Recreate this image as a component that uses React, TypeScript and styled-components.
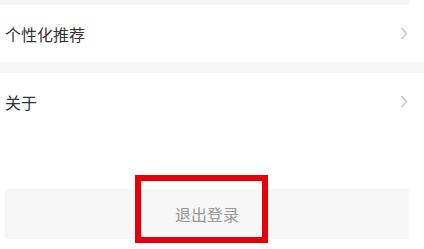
import styled, { createGlobalStyle } from 'styled-components';

const GlobalStyle = createGlobalStyle`
  html, body {
    margin: 0;
    padding: 0;
    background: #ffffff;
    font-family: "Noto Sans CJK SC", "Noto Sans", sans-serif;
  }
`;

const Page = styled.div`
  position: relative;
  width: 424px;
  height: 249px;
  overflow: hidden;
  background: #ffffff;
`;

const Gap = styled.div<{ $h: number; $full?: boolean }>`
  height: ${(p) => p.$h}px;
  width: ${(p) => (p.$full ? '100%' : '409px')};
  background: #f6f6f6;
`;

const Row = styled.div`
  height: 57px;
  display: flex;
  align-items: center;
  justify-content: space-between;
  padding: 0 16px 0 5px;
  font-size: 16px;
  color: #333333;
  background: #ffffff;
`;

const Chevron = () => (
  <svg width="8" height="13" viewBox="0 0 8 13">
    <path d="M1.5 1 L6.5 6.5 L1.5 12" fill="none" stroke="#c4c4c4" strokeWidth="1.3" />
  </svg>
);

const Spacer = styled.div`
  height: 59px;
`;

const LogoutButton = styled.div`
  margin: 0 15px 0 5px;
  height: 50px;
  background: #f7f7f7;
  display: flex;
  align-items: center;
  justify-content: center;
  font-size: 16px;
  color: #999999;
`;

const Highlight = styled.div`
  position: absolute;
  left: 135px;
  top: 175px;
  width: 133px;
  height: 68px;
  box-sizing: border-box;
  border: 6px solid #e5000a;
`;

export default function App() {
  return (
    <Page>
      <GlobalStyle />
      <Gap $h={5} />
      <Row>
        <span>个性化推荐</span>
        <Chevron />
      </Row>
      <Gap $h={11} $full />
      <Row>
        <span>关于</span>
        <Chevron />
      </Row>
      <Spacer />
      <LogoutButton>退出登录</LogoutButton>
      <Highlight />
    </Page>
  );
}
